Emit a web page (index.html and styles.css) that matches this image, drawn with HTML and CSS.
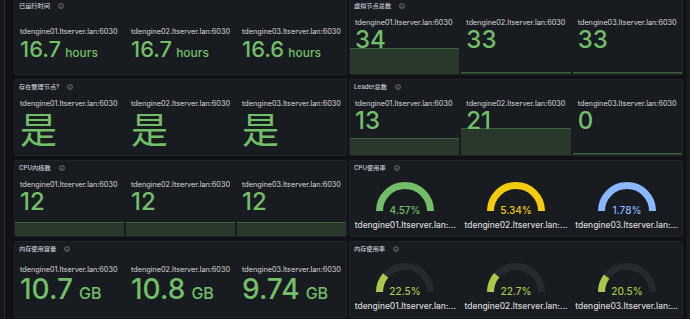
FILE: index.html
```html
<!DOCTYPE html>
<html lang="zh">
<head>
    <meta charset="UTF-8">
    <meta name="viewport" content="width=device-width, initial-scale=1.0">
    <title>TDengine 集群</title>
    <link rel="stylesheet" href="styles.css">
</head>
<body>
    <div class="page">
        <div class="rail"></div>

        <main class="grid">

            <!-- 运行时间 -->
            <article class="panel">
                <header><h2>已运行时间</h2><svg class="info" viewBox="0 0 6 6"><circle cx="3" cy="3" r="2.4"/><path d="M3 2.7V4.4M3 1.7V1.9"/></svg></header>
                <div class="stats uptime">
                    <div class="stat"><p class="host">tdengine01.ltserver.lan:6030</p><p class="value">16.7<span class="unit">hours</span></p></div>
                    <div class="stat"><p class="host">tdengine02.ltserver.lan:6030</p><p class="value">16.7<span class="unit">hours</span></p></div>
                    <div class="stat"><p class="host">tdengine03.ltserver.lan:6030</p><p class="value">16.6<span class="unit">hours</span></p></div>
                </div>
            </article>

            <!-- 虚拟节点 -->
            <article class="panel">
                <header><h2>虚拟节点总数</h2><svg class="info" viewBox="0 0 6 6"><circle cx="3" cy="3" r="2.4"/><path d="M3 2.7V4.4M3 1.7V1.9"/></svg></header>
                <div class="stats">
                    <div class="stat"><div class="spark" style="height: 25px"></div><p class="host">tdengine01.ltserver.lan:6030</p><p class="value">34</p></div>
                    <div class="stat"><div class="spark" style="height: 1px"></div><p class="host">tdengine02.ltserver.lan:6030</p><p class="value">33</p></div>
                    <div class="stat"><div class="spark" style="height: 1px"></div><p class="host">tdengine03.ltserver.lan:6030</p><p class="value">33</p></div>
                </div>
            </article>

            <!-- 管理节点 -->
            <article class="panel">
                <header><h2>存在管理节点?</h2><svg class="info" viewBox="0 0 6 6"><circle cx="3" cy="3" r="2.4"/><path d="M3 2.7V4.4M3 1.7V1.9"/></svg></header>
                <div class="stats">
                    <div class="stat"><p class="host">tdengine01.ltserver.lan:6030</p><p class="value cjk">是</p></div>
                    <div class="stat"><p class="host">tdengine02.ltserver.lan:6030</p><p class="value cjk">是</p></div>
                    <div class="stat"><p class="host">tdengine03.ltserver.lan:6030</p><p class="value cjk">是</p></div>
                </div>
            </article>

            <!-- Leader -->
            <article class="panel">
                <header><h2>Leader总数</h2><svg class="info" viewBox="0 0 6 6"><circle cx="3" cy="3" r="2.4"/><path d="M3 2.7V4.4M3 1.7V1.9"/></svg></header>
                <div class="stats">
                    <div class="stat"><div class="spark" style="height: 16px"></div><p class="host">tdengine01.ltserver.lan:6030</p><p class="value">13</p></div>
                    <div class="stat"><div class="spark" style="height: 26px"></div><p class="host">tdengine02.ltserver.lan:6030</p><p class="value">21</p></div>
                    <div class="stat"><div class="spark" style="height: 1px"></div><p class="host">tdengine03.ltserver.lan:6030</p><p class="value">0</p></div>
                </div>
            </article>

            <!-- CPU 核数 -->
            <article class="panel">
                <header><h2>CPU内核数</h2><svg class="info" viewBox="0 0 6 6"><circle cx="3" cy="3" r="2.4"/><path d="M3 2.7V4.4M3 1.7V1.9"/></svg></header>
                <div class="stats">
                    <div class="stat"><div class="spark" style="height: 13px"></div><p class="host">tdengine01.ltserver.lan:6030</p><p class="value">12</p></div>
                    <div class="stat"><div class="spark" style="height: 13px"></div><p class="host">tdengine02.ltserver.lan:6030</p><p class="value">12</p></div>
                    <div class="stat"><div class="spark" style="height: 13px"></div><p class="host">tdengine03.ltserver.lan:6030</p><p class="value">12</p></div>
                </div>
            </article>

            <!-- CPU 使用率 -->
            <article class="panel">
                <header><h2>CPU使用率</h2><svg class="info" viewBox="0 0 6 6"><circle cx="3" cy="3" r="2.4"/><path d="M3 2.7V4.4M3 1.7V1.9"/></svg></header>
                <div class="gauges">
                    <div class="gauge green">
                        <svg viewBox="0 0 64 38"><path class="arc" d="M6.5 33A25.5 25.5 0 0 1 57.5 33"/><text x="32" y="36">4.57%</text></svg>
                        <p class="name" title="tdengine01.ltserver.lan:6030">tdengine01.ltserver.lan:...</p>
                    </div>
                    <div class="gauge yellow">
                        <svg viewBox="0 0 64 38"><path class="arc" d="M6.5 33A25.5 25.5 0 0 1 57.5 33"/><text x="32" y="36">5.34%</text></svg>
                        <p class="name" title="tdengine02.ltserver.lan:6030">tdengine02.ltserver.lan:...</p>
                    </div>
                    <div class="gauge blue">
                        <svg viewBox="0 0 64 38"><path class="arc" d="M6.5 33A25.5 25.5 0 0 1 57.5 33"/><text x="32" y="36">1.78%</text></svg>
                        <p class="name" title="tdengine03.ltserver.lan:6030">tdengine03.ltserver.lan:...</p>
                    </div>
                </div>
            </article>

            <!-- 内存容量 -->
            <article class="panel">
                <header><h2>内存使用容量</h2><svg class="info" viewBox="0 0 6 6"><circle cx="3" cy="3" r="2.4"/><path d="M3 2.7V4.4M3 1.7V1.9"/></svg></header>
                <div class="stats memory">
                    <div class="stat"><p class="host">tdengine01.ltserver.lan:6030</p><p class="value">10.7<span class="unit">GB</span></p></div>
                    <div class="stat"><p class="host">tdengine02.ltserver.lan:6030</p><p class="value">10.8<span class="unit">GB</span></p></div>
                    <div class="stat"><p class="host">tdengine03.ltserver.lan:6030</p><p class="value">9.74<span class="unit">GB</span></p></div>
                </div>
            </article>

            <!-- 内存使用率 -->
            <article class="panel">
                <header><h2>内存使用率</h2><svg class="info" viewBox="0 0 6 6"><circle cx="3" cy="3" r="2.4"/><path d="M3 2.7V4.4M3 1.7V1.9"/></svg></header>
                <div class="gauges">
                    <div class="gauge lime">
                        <svg viewBox="0 0 64 38"><path class="track" d="M6.5 33A25.5 25.5 0 0 1 57.5 33"/><path class="arc" d="M6.5 33A25.5 25.5 0 0 1 12.61 16.44"/><text x="32" y="36">22.5%</text></svg>
                        <p class="name" title="tdengine01.ltserver.lan:6030">tdengine01.ltserver.lan:...</p>
                    </div>
                    <div class="gauge lime">
                        <svg viewBox="0 0 64 38"><path class="track" d="M6.5 33A25.5 25.5 0 0 1 57.5 33"/><path class="arc" d="M6.5 33A25.5 25.5 0 0 1 12.72 16.31"/><text x="32" y="36">22.7%</text></svg>
                        <p class="name" title="tdengine02.ltserver.lan:6030">tdengine02.ltserver.lan:...</p>
                    </div>
                    <div class="gauge lime">
                        <svg viewBox="0 0 64 38"><path class="track" d="M6.5 33A25.5 25.5 0 0 1 57.5 33"/><path class="arc" d="M6.5 33A25.5 25.5 0 0 1 11.61 17.69"/><text x="32" y="36">20.5%</text></svg>
                        <p class="name" title="tdengine03.ltserver.lan:6030">tdengine03.ltserver.lan:...</p>
                    </div>
                </div>
            </article>

        </main>

        <div class="scroll"></div>
    </div>
</body>
</html>
```

FILE: styles.css
```css
body {
    margin: 0;
    background-color: #111217;
    font-family: Inter, "Noto Sans CJK SC", sans-serif;
    color: #d8d9da;
    overflow: hidden;
}

p {
    margin: 0;
}

.page {
    display: flex;
    height: 319px;
}

.rail {
    width: 4px;
    background-color: #16171c;
    border-right: 1px solid #2c2e34;
}

.scroll {
    width: 3px;
    margin-left: auto;
    background-color: #1b1d22;
}

.grid {
    display: grid;
    grid-template-columns: 333px 334px;
    grid-auto-rows: 77px;
    gap: 4px 2px;
    margin: -2px 0 0 9px;
}

.panel {
    display: flex;
    flex-direction: column;
    background-color: #181b1f;
    border: 1px solid #202328;
    border-radius: 2px;
    overflow: hidden;
}

.panel header {
    display: flex;
    align-items: center;
    height: 13px;
    padding-left: 4px;
}

.panel h2 {
    margin: 0;
    font-size: 6.2px;
    font-weight: 500;
    color: #ccccdc;
}

.info {
    width: 6px;
    height: 6px;
    margin-left: 8px;
    fill: none;
    stroke: #9fa3ab;
    stroke-width: 0.6;
}

/* stat panels */

.stats {
    flex: 1;
    display: flex;
    gap: 2px;
}

.stat {
    flex: 1;
    position: relative;
    padding: 6px 0 0 5px;
}

.stats.uptime .stat {
    padding-top: 15px;
}

.stats.memory .stat {
    padding-top: 10px;
}

.spark {
    position: absolute;
    left: 0;
    right: 0;
    bottom: 0;
    background-color: #28382a;
    border-top: 1px solid #3d6240;
}

.host {
    position: relative;
    font-size: 7.25px;
    line-height: 9px;
    white-space: nowrap;
}

.value {
    position: relative;
    margin-top: 1px;
    font-size: 24px;
    line-height: 24px;
    font-weight: 500;
    color: #73bf69;
}

.value.cjk {
    font-family: "Noto Sans CJK SC", sans-serif;
    font-size: 37px;
    line-height: 34px;
    font-weight: 400;
    margin-top: 3px;
}

.stats.uptime .value {
    font-size: 22px;
}

.unit {
    margin-left: 4px;
    font-size: 12px;
}

.stats.memory .value {
    margin-top: 1px;
    font-size: 28px;
    line-height: 29px;
}

.stats.memory .unit {
    margin-left: 6px;
    font-size: 16px;
}

/* gauges */

.gauges {
    flex: 1;
    display: flex;
}

.gauge {
    flex: 1;
    display: flex;
    flex-direction: column;
    align-items: center;
    padding-top: 4px;
    min-width: 0;
}

.gauge svg {
    width: 64px;
    height: 38px;
}

.gauge .arc,
.gauge .track {
    fill: none;
    stroke-width: 7;
}

.gauge .track {
    stroke: #26292e;
}

.gauge text {
    font-size: 10px;
    font-weight: 500;
    text-anchor: middle;
}

.name {
    margin-top: 4px;
    font-size: 8.4px;
    line-height: 10px;
    font-weight: 500;
    white-space: nowrap;
}

.green .arc { stroke: #73bf69; }
.green text { fill: #73bf69; }
.yellow .arc { stroke: #f2cc0c; }
.yellow text { fill: #f2cc0c; }
.blue .arc { stroke: #8ab8ff; }
.blue text { fill: #8ab8ff; }
.lime .arc { stroke: #a9c94a; }
.lime text { fill: #a9c94a; }
```
